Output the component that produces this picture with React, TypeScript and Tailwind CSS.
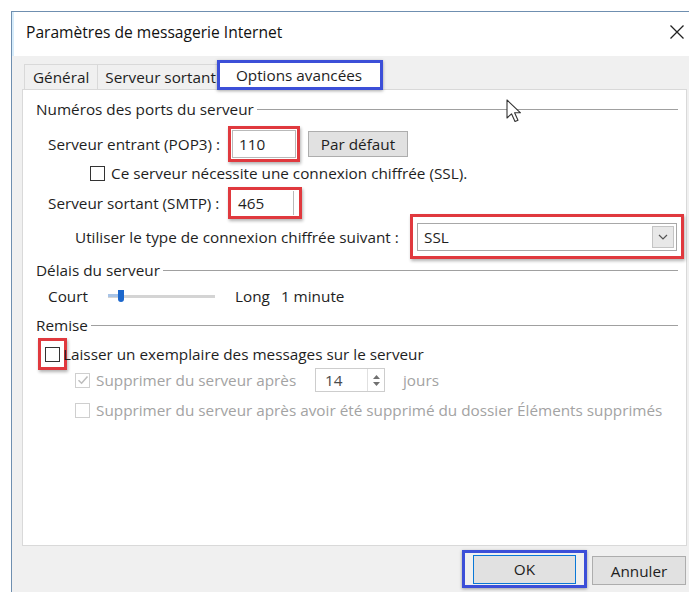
import React from "react";

const font = { fontFamily: '"Open Sans", "Noto Sans", sans-serif' };

function Check({ checked = false, disabled = false }: { checked?: boolean; disabled?: boolean }) {
  return (
    <span
      className={`flex h-[15px] w-[15px] shrink-0 items-center justify-center border bg-white ${
        disabled ? "border-[#cfcfcf]" : "border-[#333333]"
      }`}
    >
      {checked && (
        <svg width="12" height="12" viewBox="0 0 12 12">
          <path d="M1.5 6.2 L4.6 9.2 L10.5 2.5" fill="none" stroke="#bdbdbd" strokeWidth="1.5" />
        </svg>
      )}
    </span>
  );
}

function GroupLabel({ text }: { text: string }) {
  return (
    <div className="flex w-full items-center gap-[3px] pr-[6px]">
      <span className="text-[#1e1e1e]">{text}</span>
      <span className="h-px flex-1 bg-[#a0a0a0]" />
    </div>
  );
}

export default function App() {
  return (
    <div className="relative h-[592px] w-[689px] overflow-hidden bg-white pl-[11px] pt-[11px] text-[15.3px] leading-[20px] text-[#1e1e1e]" style={font}>
      {/* dialog window */}
      <div className="flex h-full flex-col border-l border-t border-[#6f8fb0] bg-[#f0f0f0]">
        <div className="flex h-[44px] items-center justify-between border-l-2 border-[#d7ecfa] bg-white pb-[4px] pl-[12px] pr-[4px]">
          <span className="text-[15.6px] text-[#111]">Paramètres de messagerie Internet</span>
          <svg width="16" height="16" viewBox="0 0 16 16">
            <path d="M1.5 1.5 L14.5 14.5 M14.5 1.5 L1.5 14.5" stroke="#222" strokeWidth="1.3" />
          </svg>
        </div>

        {/* tab strip */}
        <div className="flex h-[33px] items-end pl-[12px]">
          <div className="flex h-[25px] items-center border border-b-0 border-[#d9d9d9] pl-[8px] pr-[8px]">Général</div>
          <div className="flex h-[25px] items-center border-t border-[#d9d9d9] pl-[7px] pr-[1px]">Serveur sortant</div>
          <div className="relative mb-[-1px] flex h-[30px] items-center border-[3px] border-[#3c4fd8] bg-white pl-[16px] pr-[18px] shadow-[0_1px_3px_rgba(0,0,0,0.35)]">
            Options avancées
          </div>
        </div>

        {/* tab page */}
        <div className="ml-[10px] mr-[2px] flex h-[457px] flex-col border border-[#d9d9d9] bg-white pl-[13px] pr-[2px]">
          <div className="h-[36px] pt-[9px]">
            <GroupLabel text="Numéros des ports du serveur" />
          </div>

          <div className="flex h-[36px] items-center pl-[12px]">
            <span className="w-[180px]">Serveur entrant (POP3) :</span>
            <div className="flex h-[36px] w-[72px] items-center border-[3px] border-[#e0393e] bg-white p-[1px] shadow-[1px_2px_3px_rgba(0,0,0,0.3)]">
              <div className="flex h-full w-full items-center border border-[#b9b9b9] pl-[6px]">110</div>
            </div>
            <button className="ml-[8px] flex h-[26px] w-[100px] items-center justify-center border border-[#adadad] bg-[#e1e1e1]">Par défaut</button>
          </div>

          <div className="flex h-[22px] items-center gap-[6px] pl-[54px]">
            <Check />
            <span>Ce serveur nécessite une connexion chiffrée (SSL).</span>
          </div>

          <div className="mt-[3px] flex h-[32px] items-center pl-[12px]">
            <span className="w-[180px]">Serveur sortant (SMTP) :</span>
            <div className="flex h-[32px] w-[74px] items-center border-[3px] border-[#e0393e] bg-white p-[1px] shadow-[1px_2px_3px_rgba(0,0,0,0.3)]">
              <div className="flex h-full w-[62px] items-center border-r border-[#b9b9b9] pl-[6px]">465</div>
            </div>
          </div>

          <div className="mt-[-5px] flex h-[45px] items-center pl-[39px]">
            <span className="w-[335px]">Utiliser le type de connexion chiffrée suivant :</span>
            <div className="flex h-[45px] flex-1 items-center border-[3px] border-[#e0393e] bg-white px-[4px] shadow-[1px_2px_3px_rgba(0,0,0,0.3)]">
              <div className="flex h-[28px] flex-1 items-center justify-between border border-[#a8a8a8] pl-[6px] pr-[2px]">
                <span>SSL</span>
                <span className="flex h-[22px] w-[22px] items-center justify-center border border-[#c4c4c4] bg-[#e8e8e8]">
                  <svg width="10" height="6" viewBox="0 0 10 6">
                    <path d="M1 1 L5 5 L9 1" fill="none" stroke="#555" strokeWidth="1.2" />
                  </svg>
                </span>
              </div>
            </div>
          </div>

          <div className="flex h-[22px] items-center">
            <GroupLabel text="Délais du serveur" />
          </div>

          <div className="flex h-[30px] items-center pl-[12px]">
            <span className="w-[60px]">Court</span>
            <div className="relative flex h-[12px] w-[107px] items-center">
              <span className="h-[3px] w-full bg-[#d4d4d4]" />
              <span className="absolute left-0 top-[4px] h-[3px] w-[12px] bg-[#a9c4e6]" />
              <span className="absolute left-[10px] top-0 h-[12px] w-[6px] rounded-b-[3px] bg-[#1c67cc]" />
            </div>
            <span className="ml-[20px]">Long</span>
            <span className="ml-[11px]">1 minute</span>
          </div>

          <div className="flex h-[28px] items-center">
            <GroupLabel text="Remise" />
          </div>

          <div className="relative mt-[-1px] flex h-[32px] items-center">
            <div className="ml-[2px] flex h-[32px] w-[29px] items-center justify-center border-[3px] border-[#e0393e] shadow-[1px_2px_3px_rgba(0,0,0,0.3)]">
              <Check />
            </div>
            <span className="ml-[-4px]">Laisser un exemplaire des messages sur le serveur</span>
          </div>

          <div className="mt-[-2px] flex h-[24px] items-center pl-[39px] text-[#a3a3a3]">
            <Check checked disabled />
            <span className="ml-[6px] w-[219px]">Supprimer du serveur après</span>
            <div className="flex h-[24px] w-[70px] items-center justify-between border border-[#cdcdcd] pl-[9px] text-[#4a4a4a]">
              <span>14</span>
              <span className="flex h-full w-[17px] flex-col items-center justify-center gap-[3px] border-l border-[#e0e0e0]">
                <svg width="7" height="4" viewBox="0 0 7 4"><path d="M0 4 L3.5 0 L7 4 Z" fill="#707070" /></svg>
                <svg width="7" height="4" viewBox="0 0 7 4"><path d="M0 0 L3.5 4 L7 0 Z" fill="#707070" /></svg>
              </span>
            </div>
            <span className="ml-[18px]">jours</span>
          </div>

          <div className="mt-[6px] flex h-[24px] items-center pl-[39px] text-[#a3a3a3]">
            <Check disabled />
            <span className="ml-[6px] whitespace-nowrap">Supprimer du serveur après avoir été supprimé du dossier Éléments supprimés</span>
          </div>
        </div>

        {/* dialog buttons */}
        <div className="flex flex-1 items-start justify-end gap-[5px] pr-[3px] pt-[4px]">
          <div className="flex h-[38px] w-[125px] items-center justify-center border-[3px] border-[#3c4fd8] shadow-[0_1px_3px_rgba(0,0,0,0.35)]">
            <button className="flex h-[29px] w-[103px] items-center justify-center border border-[#0a78d7] bg-[#e1e1e1]">OK</button>
          </div>
          <button className="mt-[6px] flex h-[29px] w-[94px] items-center justify-center border border-[#adadad] bg-[#e1e1e1]">Annuler</button>
        </div>
      </div>

      {/* mouse pointer */}
      <svg className="absolute left-[506px] top-[99px]" width="18" height="26" viewBox="0 0 18 26">
        <path d="M1 1 L1 19 L5.5 14.8 L9 22.5 L12 21.2 L8.6 13.8 L14.5 13.8 Z" fill="white" stroke="#333" strokeWidth="1.1" strokeLinejoin="round" />
      </svg>
    </div>
  );
}
